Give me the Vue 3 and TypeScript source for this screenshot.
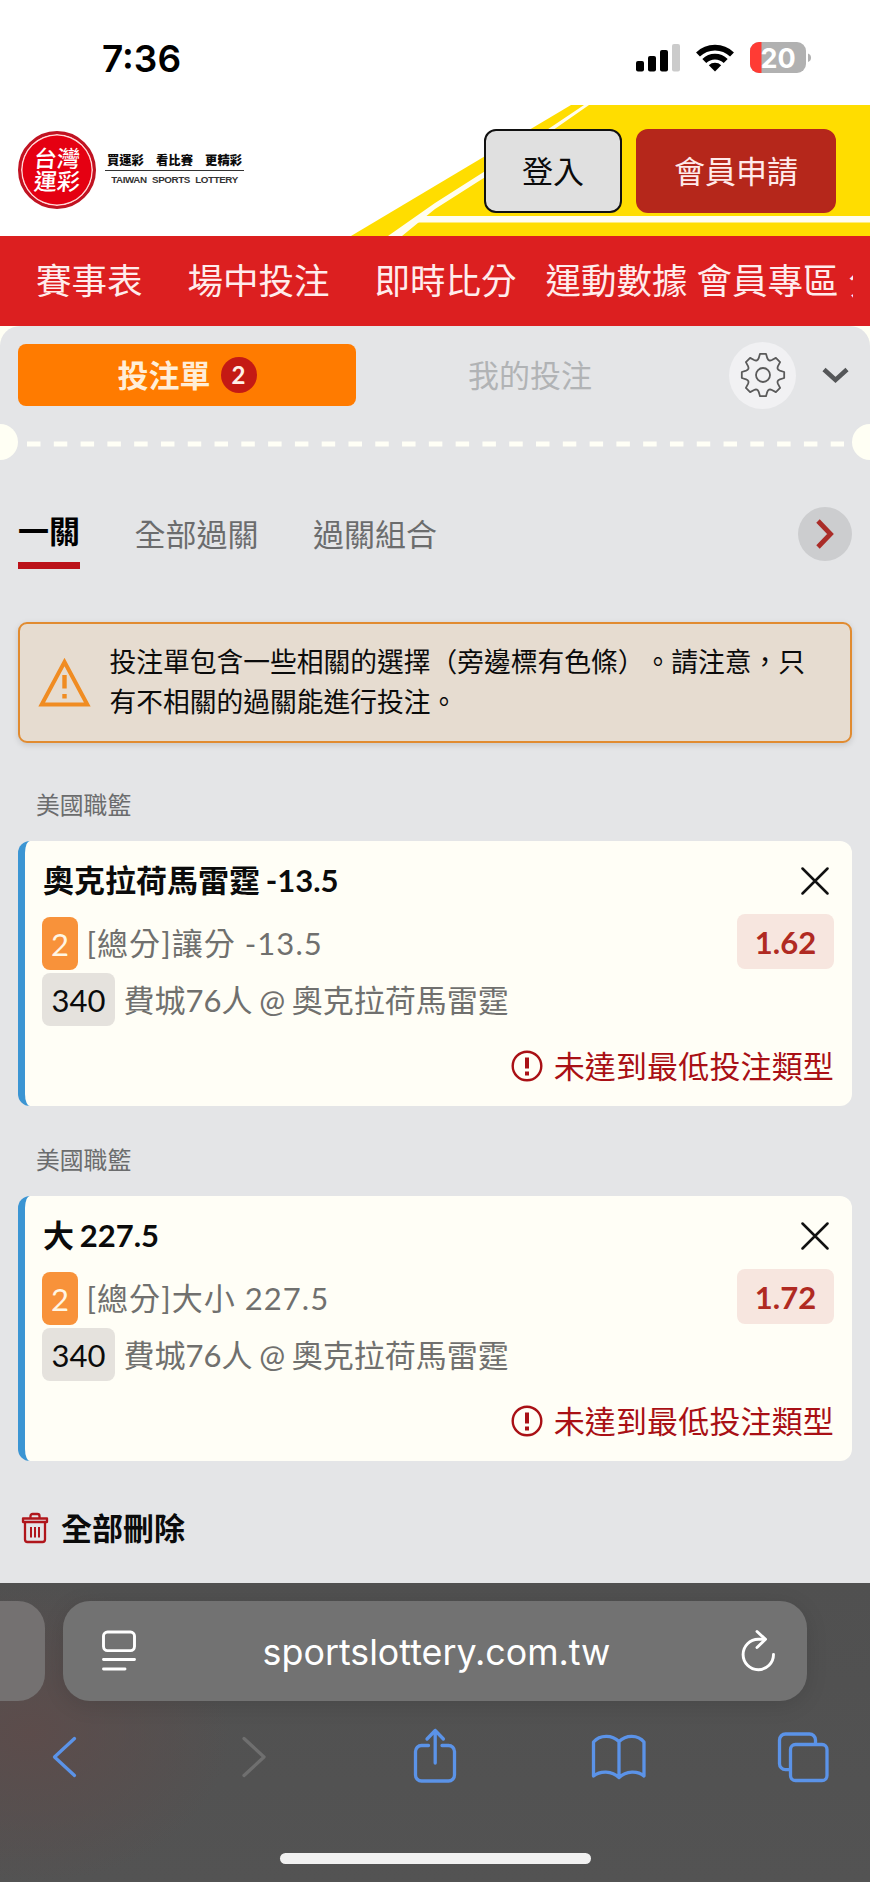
<script setup lang="ts">
interface Bet {
  title: string
  market: string
  odds: string
}

const league = '美國職籃'
const matchId = '340'
const match = '費城76人 @ 奧克拉荷馬雷霆'
const bets: Bet[] = [
  { title: '奧克拉荷馬雷霆 -13.5', market: '[總分]讓分 -13.5', odds: '1.62' },
  { title: '大 227.5', market: '[總分]大小 227.5', odds: '1.72' },
]
const navItems: string[] = ['賽事表', '場中投注', '即時比分', '運動數據', '會員專區', '分析']

function polar(angle: number, radius: number): string {
  return `${(Math.cos(angle) * radius).toFixed(2)} ${(Math.sin(angle) * radius).toFixed(2)}`
}

// Outline of an eight-toothed gear centred on the origin, with rounded valleys.
function gearPath(): string {
  const step = Math.PI / 4
  let d = ''
  for (let i = 0; i < 8; i++) {
    const a = i * step - Math.PI / 2
    d += `${i === 0 ? 'M' : 'L'}${polar(a - 0.25, 17.4)}L${polar(a - 0.14, 21.4)}`
    d += `L${polar(a + 0.14, 21.4)}L${polar(a + 0.25, 17.4)}`
    d += `Q${polar(a + step / 2, 14.6)} ${polar(a + step - 0.25, 17.4)}`
  }
  return `${d}Z`
}
const gear = gearPath()
</script>

<template>
  <div class="phone">
    <div class="status">
      <span class="clock">7:36</span>
      <svg class="status-icons" width="180" height="40" viewBox="632 38 180 40">
        <rect x="636" y="61" width="8" height="10.500" rx="2" />
        <rect x="648" y="56" width="8" height="15.500" rx="2" />
        <rect x="660" y="50" width="8" height="21.500" rx="2" />
        <rect x="672" y="44" width="8" height="27.500" rx="2" fill="#cbcbcb" />
        <g fill="none" stroke="#000" stroke-width="5.600">
          <path d="M698 54.500a24.500 24.500 0 0 1 34 0" />
          <path d="M704.300 61a15.300 15.300 0 0 1 21.400 0" />
        </g>
        <path d="M715 71.500L708.800 65.300a9 9 0 0 1 12.400 0Z" />
        <path d="M759 42H797a9 9 0 0 1 9 9V64a9 9 0 0 1-9 9H759a9 9 0 0 1-9-9V51a9 9 0 0 1 9-9Z" fill="#b1b1b1" />
        <path d="M761.500 42H759a9 9 0 0 0-9 9V64a9 9 0 0 0 9 9H761.500Z" fill="#ff3b34" />
        <path d="M808 53.500a4.500 4.500 0 0 1 0 8.500Z" fill="#b1b1b1" />
        <text class="battery-text" x="778" y="67.700" text-anchor="middle">20</text>
      </svg>
    </div>

    <header class="header">
      <svg class="stripes" width="870" height="131" viewBox="0 105 870 131">
        <path d="M351 236L571 105H870V236Z" fill="#ffdd00" />
        <path d="M388 236L435 203L490 168L584 105H589L490 174L435 209L402 236Z" fill="#fffdf0" />
        <path d="M422 216H870V222.500H412Z" fill="#fffdf0" />
      </svg>
      <div class="brand">
        <div class="seal"><span>台灣</span><span>運彩</span></div>
        <div class="slogan">
          <div class="slogan-zh"><span>買運彩</span><span>看比賽</span><span>更精彩</span></div>
          <div class="slogan-en">TAIWAN SPORTS LOTTERY</div>
        </div>
      </div>
      <div class="actions">
        <button class="btn login">登入</button>
        <button class="btn join">會員申請</button>
      </div>
    </header>

    <nav class="nav">
      <div class="nav-track">
        <span v-for="item in navItems" :key="item">{{ item }}</span>
      </div>
    </nav>

    <main class="slip-wrap">
      <section class="slip">
        <div class="slip-head">
          <div class="slip-tab active"><span class="lift">投注單</span><span class="count">2</span></div>
          <div class="slip-tab"><span class="lift">我的投注</span></div>
          <div class="gear">
            <svg width="48" height="48" viewBox="-24 -24 48 48" fill="none" stroke="#5a5a5a" stroke-width="1.800" stroke-linejoin="round">
              <path :d="gear" />
              <circle r="7" />
            </svg>
          </div>
          <svg class="collapse" width="28" height="18" viewBox="0 0 28 18" fill="none" stroke="#555759" stroke-width="4.600">
            <path d="M2 3.500L13.500 14L25 3.500" />
          </svg>
        </div>

        <div class="tear">
          <i class="notch"></i>
          <svg width="817" height="6" viewBox="0 0 817 6"><path d="M0 3H817" stroke="#fffff6" stroke-width="5" stroke-dasharray="13.500 13.290" /></svg>
          <i class="notch right"></i>
        </div>

        <div class="modes">
          <span class="mode on">一關</span>
          <span class="mode">全部過關</span>
          <span class="mode">過關組合</span>
          <div class="next">
            <svg width="20" height="32" viewBox="0 0 20 32" fill="none" stroke="#aa2c28" stroke-width="4.800"><path d="M3 3L15.500 16L3 29" /></svg>
          </div>
        </div>

        <div class="notice">
          <svg width="54" height="50" viewBox="0 0 54 50" fill="none" stroke="#f08c22">
            <path d="M26.500 4L49.300 46.500H3.700Z" stroke-width="4" />
            <path d="M26.500 17V30.500M26.500 36V40.500" stroke-width="4.400" />
          </svg>
          <p>投注單包含一些相關的選擇（旁邊標有色條）。請注意，只有不相關的過關能進行投注。</p>
        </div>

        <template v-for="bet in bets" :key="bet.title">
          <div class="league">{{ league }}</div>
          <article class="card">
            <div class="row title-row">
              <strong>{{ bet.title }}</strong>
              <svg width="28" height="28" viewBox="0 0 28 28" stroke="#111" stroke-width="2.500" stroke-linecap="round"><path d="M1.500 1.500L26.500 26.500M26.500 1.500L1.500 26.500" /></svg>
            </div>
            <div class="row market-row">
              <span class="tag orange">2</span>
              <span class="market">{{ bet.market }}</span>
              <span class="odds">{{ bet.odds }}</span>
            </div>
            <div class="row match-row">
              <span class="tag grey">{{ matchId }}</span>
              <span class="match">{{ match }}</span>
            </div>
            <div class="row error-row">
              <svg width="32" height="32" viewBox="0 0 32 32" fill="none" stroke="#a91015">
                <circle cx="16" cy="16" r="14.300" stroke-width="2.400" />
                <path d="M16 7.500V18.500M16 21.500V25.500" stroke-width="4" />
              </svg>
              <span>未達到最低投注類型</span>
            </div>
          </article>
        </template>

        <div class="clear">
          <svg width="28" height="32" viewBox="0 0 28 32" fill="none" stroke="#b0161c" stroke-width="2.300" stroke-linejoin="round">
            <path d="M2 6.500H26V10H2Z" />
            <path d="M9.500 6V4a2 2 0 0 1 2-2H16.500a2 2 0 0 1 2 2V6" />
            <path d="M4 10.500V27.500a2.500 2.500 0 0 0 2.500 2.500H21.500a2.500 2.500 0 0 0 2.500-2.500V10.500" />
            <path d="M10 15V25.500M14 15V25.500M18 15V25.500" stroke-width="2" />
          </svg>
          <span>全部刪除</span>
        </div>
      </section>
    </main>

    <footer class="browser">
      <div class="address-row">
        <div class="prev-tab"></div>
        <div class="address">
          <svg width="36" height="42" viewBox="0 0 36 42" fill="none" stroke="#fff" stroke-width="2.900" stroke-linecap="round">
            <rect x="3.500" y="2" width="31" height="18.600" rx="4" />
            <path d="M3.500 29.500H34.500M3.500 39H25" />
          </svg>
          <span class="url">sportslottery.com.tw</span>
          <svg width="36" height="44" viewBox="0 0 36 44" fill="none" stroke="#fff" stroke-width="2.900" stroke-linecap="round" stroke-linejoin="round">
            <path d="M32.500 25.500A15.200 15.200 0 1 1 17.300 10.300H24" />
            <path d="M16 2.500L24.500 10.300L16 18.500" />
          </svg>
        </div>
      </div>
      <svg class="tools" width="870" height="64" viewBox="0 1724 870 64" fill="none" stroke="#5b93e8" stroke-width="3.300" stroke-linecap="round" stroke-linejoin="round">
        <path d="M74.500 1738.500L54.500 1757L74.500 1775.500" />
        <path d="M244 1738.500L264 1757L244 1775.500" stroke="#6f6f6f" />
        <path d="M428.500 1745.500H421.500a6 6 0 0 0-6 6V1775a6 6 0 0 0 6 6H448.500a6 6 0 0 0 6-6V1751.500a6 6 0 0 0-6-6H442" />
        <path d="M435.200 1763V1730.500M427 1739L435.200 1730.500L443.400 1739" />
        <path d="M619 1741.500C612 1734.500 600 1734.500 593.500 1742V1776C600 1770.500 612 1770.500 619 1777.500C626 1770.500 638 1770.500 644 1776V1742C638 1734.500 626 1734.500 619 1741.500V1777" />
        <rect x="790.500" y="1744.500" width="36.500" height="36" rx="5" />
        <path d="M790 1769.700H785.500a6 6 0 0 1-6-6V1740a6 6 0 0 1 6-6H809.500a6 6 0 0 1 6 6V1744" />
      </svg>
      <div class="home"></div>
    </footer>
  </div>
</template>

<style>
body {
  margin: 0;
  background: #fff;
}
</style>

<style scoped>
.phone {
  width: 870px;
  height: 1882px;
  overflow: hidden;
  display: flex;
  flex-direction: column;
  background: #fff;
  font-family: Lato, "Noto Sans CJK TC", sans-serif;
  font-size: 31px;
  color: #0b0b0b;
  white-space: nowrap;
}
.status {
  height: 105px;
  display: flex;
  flex: none;
}
.clock {
  width: 530px;
  padding-left: 102px;
  padding-top: 37px;
  font: 600 37px/44px Inter, sans-serif;
  color: #000;
}
.status-icons {
  margin-top: 38px;
}
.battery-text {
  font: 700 27px Inter, sans-serif;
  fill: #fff;
}
.header {
  height: 131px;
  flex: none;
  position: relative;
  display: flex;
  justify-content: space-between;
}
.stripes {
  position: absolute;
  inset: 0;
}
.brand {
  display: flex;
  padding: 26px 0 0 18px;
}
.seal {
  box-sizing: border-box;
  width: 78px;
  height: 78px;
  border-radius: 50%;
  background: #e50012;
  border: 3px solid #c01322;
  box-shadow: inset 0 0 0 1.500px #ffd9d9;
  display: flex;
  flex-direction: column;
  align-items: center;
  justify-content: center;
  color: #fff;
  font-size: 23px;
  font-weight: 500;
  line-height: 23px;
}
.seal span {
  transform: skewX(-5deg);
}
.slogan {
  width: 139px;
  margin-left: 9px;
  padding-top: 20px;
}
.slogan-zh {
  display: flex;
  justify-content: space-between;
  padding: 1px 2px;
  height: 17px;
  border-bottom: 1px solid #333;
  font-size: 12.300px;
  line-height: 17px;
  font-weight: 900;
}
.slogan-en {
  text-align: center;
  font: 700 9.800px/17px "Liberation Sans", sans-serif;
  letter-spacing: -0.400px;
  word-spacing: 3px;
  color: #333;
}
.actions {
  position: relative;
  display: flex;
  gap: 14px;
  padding: 24px 34px 0 0;
}
.btn {
  box-sizing: border-box;
  height: 84px;
  padding: 0 0 4px;
  border: 2px solid #111;
  border-radius: 12px;
  font: inherit;
  color: #0b0b0b;
}
.login {
  width: 138px;
  background: #e0e0e0;
}
.join {
  width: 200px;
  background: #b5271b;
  border-color: #b5271b;
  color: #ffeaea;
}
.nav {
  height: 90px;
  flex: none;
  background: #dc1f20;
}
.nav-track {
  width: 817px;
  padding-left: 36px;
  overflow: hidden;
  display: flex;
  color: #ffecec;
  font-size: 35.500px;
  line-height: 90px;
}
.nav-track span {
  flex: none;
  margin-right: 45px;
}
.nav-track span:nth-child(3) {
  margin-right: 29px;
}
.nav-track span:nth-child(4) {
  margin-right: 9px;
}
.nav-track span:nth-child(5) {
  margin-right: 10px;
}
.slip-wrap {
  flex: none;
  height: 1257px;
  background: #fffff4;
}
.slip {
  height: 1257px;
  background: #e4e5e7;
  border-radius: 20px 20px 0 0;
  overflow: hidden;
}
.slip-head {
  display: flex;
  align-items: center;
  height: 68px;
  padding: 15px 18px 0;
}
.slip-tab {
  width: 348px;
  height: 62px;
  display: flex;
  align-items: center;
  justify-content: center;
  color: #b1b3b5;
}
.slip-tab.active {
  width: 338px;
  border-radius: 8px;
  background: #ff7b00;
  color: #ffeed8;
  font-weight: 700;
}
.lift {
  padding-bottom: 3px;
}
.count {
  width: 36px;
  height: 36px;
  margin-left: 10px;
  border-radius: 50%;
  background: #c41a14;
  color: #fff0e8;
  font-size: 24px;
  line-height: 36px;
  text-align: center;
}
.gear {
  width: 67px;
  height: 67px;
  margin-left: 25px;
  border-radius: 50%;
  background: #f1f1f3;
  display: flex;
  align-items: center;
  justify-content: center;
}
.collapse {
  margin-left: 26px;
}
.tear {
  height: 36px;
  margin-top: 15px;
  display: flex;
  align-items: center;
}
.tear svg {
  margin: 4px 0 0 8.500px;
}
.notch {
  width: 18px;
  height: 36px;
  border-radius: 0 18px 18px 0;
  background: #fffff4;
}
.notch.right {
  margin-left: auto;
  border-radius: 18px 0 0 18px;
}
.modes {
  display: flex;
  height: 110px;
  margin-top: 47px;
  padding: 0 18px;
  color: #6b6c6d;
}
.mode {
  height: 56px;
  line-height: 55px;
  margin-right: 54.500px;
}
.mode.on {
  height: 55px;
  line-height: 49px;
  border-bottom: 7px solid #bb1119;
  font-weight: 700;
  color: #000;
}
.next {
  width: 54px;
  height: 54px;
  margin-left: auto;
  border-radius: 50%;
  background: #cccdcf;
  display: flex;
  align-items: center;
  justify-content: center;
}
.notice {
  box-sizing: border-box;
  width: 834px;
  height: 121px;
  margin: 5px 18px 0;
  padding: 0 0 0 18px;
  border: 2px solid #e18b30;
  border-radius: 9px;
  background: #e6dcd0;
  box-shadow: 0 2px 6px #0002;
  display: flex;
  align-items: center;
}
.notice p {
  width: 705px;
  margin: 0 0 2px 17.500px;
  font-size: 26.750px;
  line-height: 40px;
  white-space: normal;
  text-spacing-trim: space-all;
}
.league {
  height: 42px;
  padding: 41px 36px 15px;
  font-size: 23.800px;
  line-height: 42px;
  color: #6b6c6d;
}
.card + .league {
  padding-top: 33px;
}
.card {
  box-sizing: border-box;
  width: 834px;
  height: 265px;
  margin-left: 18px;
  padding: 20px 18px 0 17px;
  border-left: 7px solid #3b95d3;
  border-radius: 12px;
  background: #fffef6;
}
.row {
  display: flex;
  align-items: center;
}
.title-row {
  height: 40px;
  justify-content: space-between;
  padding: 0 5px 0 1px;
}
.title-row strong {
  margin-bottom: 5px;
  word-spacing: -1.800px;
}
.market-row {
  height: 57px;
  margin-top: 13px;
}
.match-row {
  height: 53px;
  margin-top: 2px;
}
.error-row {
  height: 36px;
  margin-top: 22px;
  justify-content: flex-end;
  gap: 11px;
  color: #a91015;
}
.error-row span {
  margin-bottom: 4px;
  letter-spacing: 0.150px;
}
.tag {
  height: 53px;
  line-height: 54px;
  border-radius: 8px;
  text-align: center;
}
.orange {
  width: 36px;
  margin-top: 2px;
  background: #f8923a;
  color: #fff6e4;
}
.grey {
  width: 73px;
  background: #e5e2dd;
}
.market {
  margin: 0 0 2px 8.500px;
  letter-spacing: 1.050px;
  color: #70706e;
}
.match {
  margin: 0 0 2px 8.500px;
  word-spacing: -1.200px;
  color: #70706e;
}
.odds {
  width: 97px;
  height: 55px;
  margin: 0 0 2px auto;
  line-height: 57px;
  border-radius: 8px;
  background: #f7e6df;
  color: #b02a22;
  font-weight: 700;
  text-align: center;
}
.clear {
  display: flex;
  align-items: center;
  gap: 12px;
  height: 46px;
  margin-top: 44px;
  padding-left: 21px;
  font-weight: 700;
}
.clear span {
  margin-bottom: 4px;
}
.browser {
  flex: none;
  height: 299px;
  background: radial-gradient(ellipse 200px 150px at 30px 150px, #5c4c4b, #5c4c4b00), linear-gradient(#505050, #535353);
}
.address-row {
  display: flex;
  gap: 18px;
  padding-top: 18px;
}
.prev-tab {
  width: 45px;
  height: 100px;
  border-radius: 0 27px 27px 0;
  background: #747171;
}
.address {
  box-sizing: border-box;
  width: 744px;
  height: 100px;
  padding: 0 30px 0 37px;
  border-radius: 27px;
  background: #727272;
  box-shadow: 0 4px 22px #0000001c;
  display: flex;
  align-items: center;
  justify-content: space-between;
}
.url {
  margin: 2px 4px 0 0;
  font: 400 35.800px/44px Inter, sans-serif;
  color: #fff;
}
.tools {
  display: block;
  margin-top: 23px;
}
.home {
  width: 311px;
  height: 11px;
  margin: 65px auto 0;
  border-radius: 6px;
  background: #f1f1f1;
}
</style>
